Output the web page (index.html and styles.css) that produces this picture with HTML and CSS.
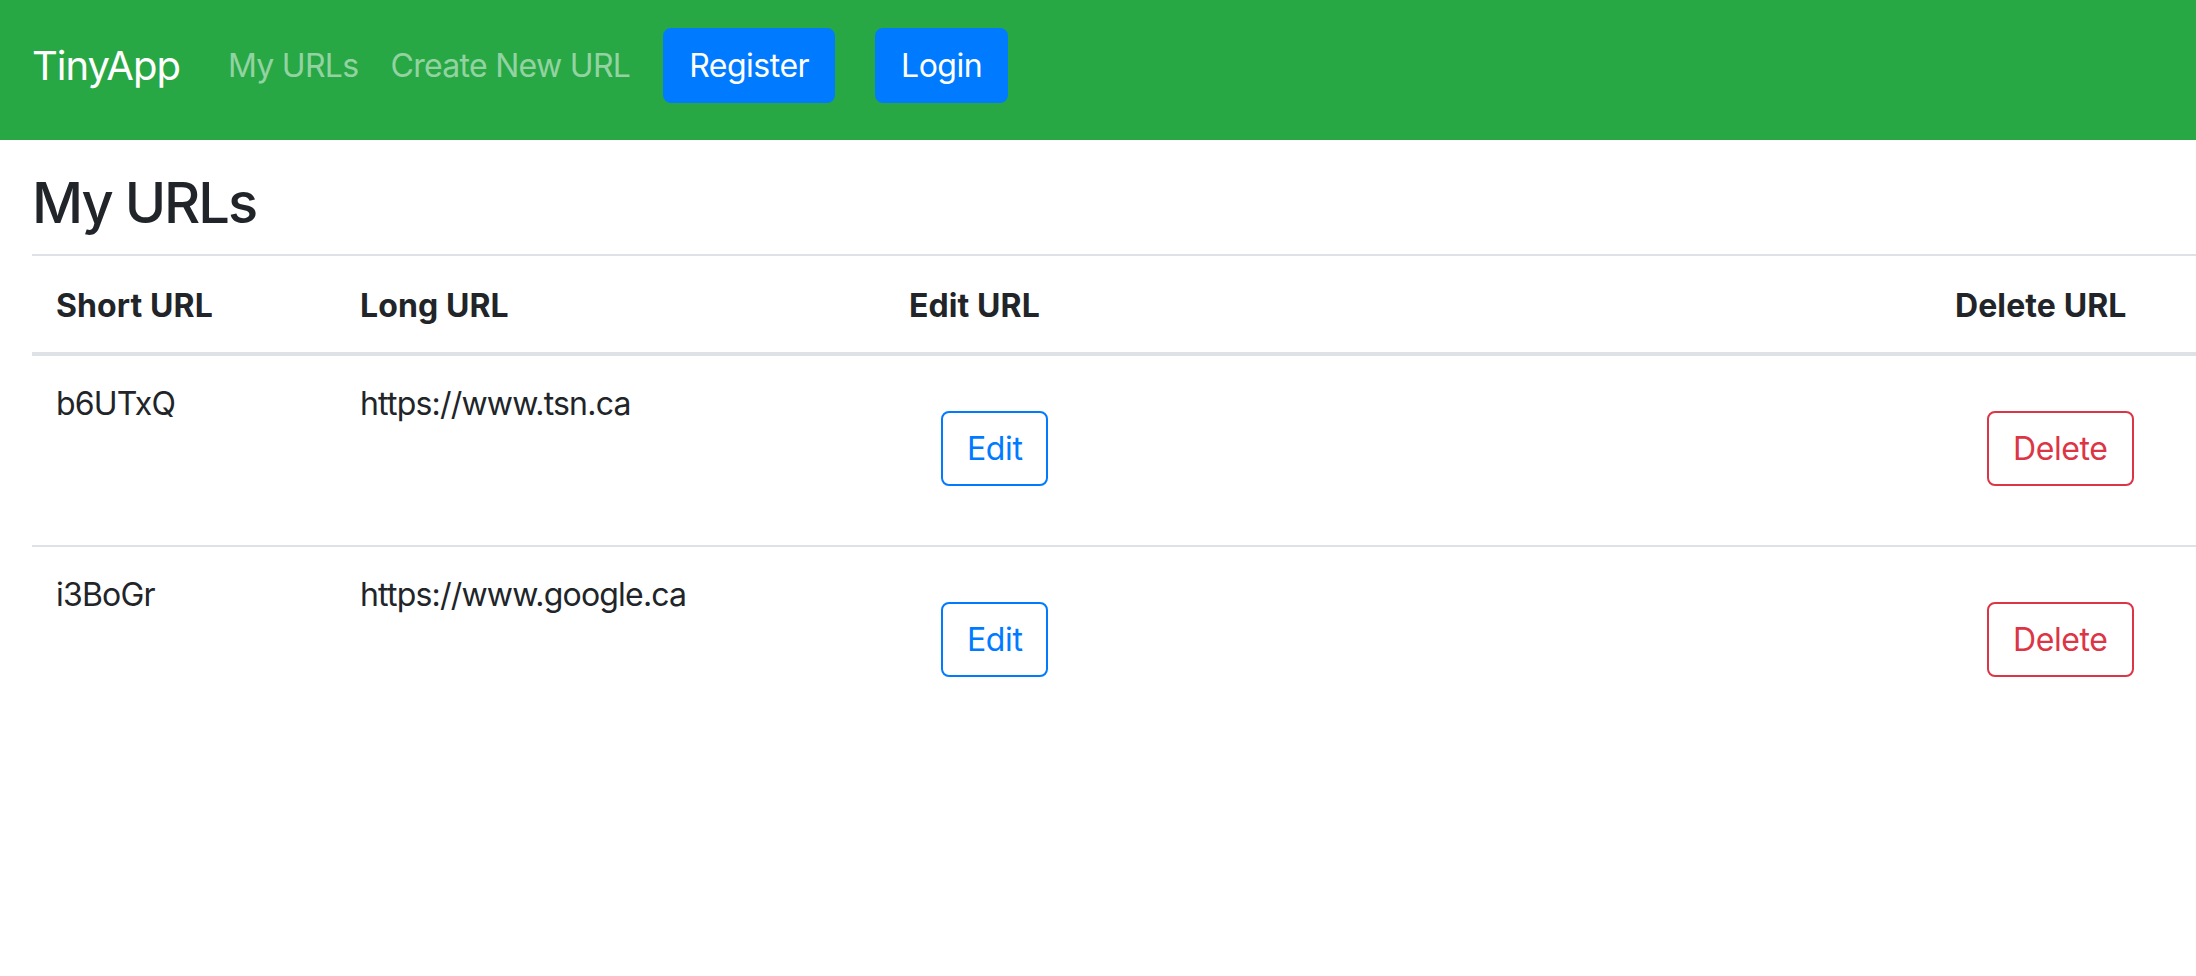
FILE: index.html
```html
<!DOCTYPE html>
<html lang="en">
<head>
<meta charset="utf-8">
<title>TinyApp</title>
<link rel="stylesheet" href="styles.css">
</head>
<body>
<nav class="navbar">
  <a class="brand" href="#">TinyApp</a>
  <div class="nav-links">
    <a class="nav-link" href="#">My URLs</a>
    <a class="nav-link" href="#">Create New URL</a>
  </div>
  <div class="auth">
    <a class="btn btn-primary" href="#">Register</a>
    <a class="btn btn-primary" href="#">Login</a>
  </div>
</nav>
<main class="content">
  <h3 class="title">My URLs</h3>
  <table class="table">
    <thead>
      <tr>
        <th class="col-short">Short URL</th>
        <th class="col-long">Long URL</th>
        <th class="col-edit">Edit URL</th>
        <th class="col-delete">Delete URL</th>
      </tr>
    </thead>
    <tbody>
      <tr>
        <td>b6UTxQ</td>
        <td>https://www.tsn.ca</td>
        <td><form class="row-form"><button type="button" class="btn btn-outline-primary">Edit</button></form></td>
        <td><form class="row-form"><button type="button" class="btn btn-outline-danger">Delete</button></form></td>
      </tr>
      <tr>
        <td>i3BoGr</td>
        <td>https://www.google.ca</td>
        <td><form class="row-form"><button type="button" class="btn btn-outline-primary">Edit</button></form></td>
        <td><form class="row-form"><button type="button" class="btn btn-outline-danger">Delete</button></form></td>
      </tr>
    </tbody>
  </table>
</main>
</body>
</html>
```
FILE: styles.css
```css
* { box-sizing: border-box; }
html, body {
  margin: 0;
  padding: 0;
  background: #fff;
}
body {
  font-family: Inter, "Noto Sans", "Liberation Sans", sans-serif;
  font-size: 32px;
  line-height: 1.5;
  color: #212529;
}
a { text-decoration: none; }

.navbar {
  display: flex;
  align-items: flex-start;
  height: 140px;
  padding: 28px 32px 0 32px;
  background: #28a745;
}
.brand {
  color: #fff;
  font-size: 40px;
  line-height: 75px;
  margin-right: 32px;
  letter-spacing: -1px;
}
.nav-links {
  display: flex;
}
.nav-link {
  color: rgba(255, 255, 255, 0.5);
  padding: 0 16px;
  line-height: 75px;
  letter-spacing: -0.7px;
}
.auth {
  display: flex;
  gap: 40px;
  margin-left: 17px;
}
.btn {
  display: inline-block;
  font-family: inherit;
  font-size: 32px;
  line-height: 47px;
  padding: 12px 24px;
  border: 2px solid transparent;
  border-radius: 8px;
  background: transparent;
  cursor: pointer;
  letter-spacing: -0.4px;
}
.btn-primary {
  background: #007bff;
  border-color: #007bff;
  color: #fff;
  letter-spacing: -0.5px;
}
.btn-outline-primary {
  color: #007bff;
  border-color: #007bff;
}
.btn-outline-danger {
  color: #dc3545;
  border-color: #dc3545;
}

.content {
  padding: 0 0 0 32px;
}
.title {
  margin: 0;
  padding: 30px 0 17px;
  font-size: 56px;
  font-weight: 500;
  line-height: 1.2;
  letter-spacing: -2px;
}
.table {
  width: 100%;
  border-collapse: collapse;
}
.table th,
.table td {
  padding: 24px;
  text-align: left;
  vertical-align: top;
  border-top: 2px solid #dee2e6;
  letter-spacing: -0.8px;
}
.table thead th {
  padding: 26px 24px 22px;
  border-bottom: 4px solid #dee2e6;
  font-weight: 700;
  letter-spacing: 0.1px;
}
.col-short { width: 304px; }
.col-long { width: 549px; }
.col-edit { width: 1046px; }
.row-form {
  margin: 31px 0 35px 32px;
}
```
